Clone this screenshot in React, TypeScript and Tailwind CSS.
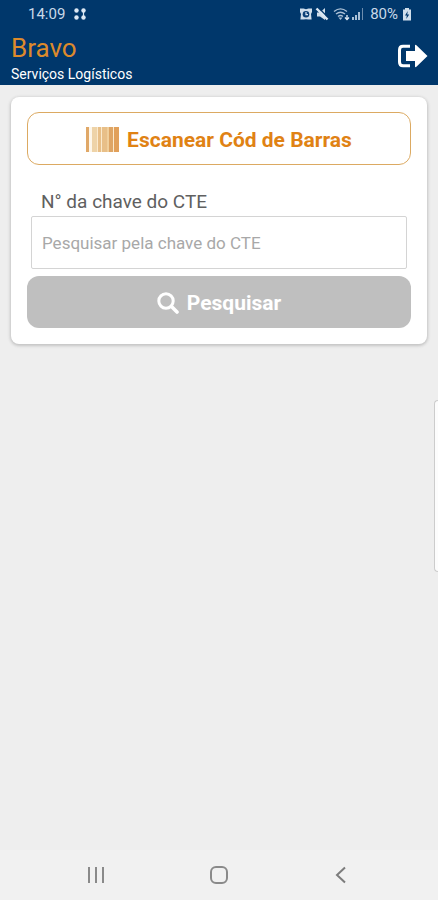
import React from "react";

function AppsIcon() {
  return (
    <svg width="14" height="14" viewBox="0 0 14 14" fill="#dce8f4" aria-hidden="true">
      <circle cx="3.500" cy="3.500" r="2.200" />
      <circle cx="10.500" cy="3.500" r="2.200" />
      <circle cx="3.500" cy="10.500" r="2.200" />
      <circle cx="10.500" cy="10.500" r="2.200" />
      <path d="M9.900 3h1.200v7H9.900z" />
    </svg>
  );
}

function AlarmIcon() {
  return (
    <svg width="14" height="14" viewBox="0 0 14 14" aria-hidden="true">
      <path d="M1 1.500h3.500l2.500.7 2.500-.7H13v3.500l-1 2 .6 5.500H9.500L7 12.200l-2.500.3H1.400L2 7 1 5z" fill="#d0deeb" />
      <circle cx="7" cy="7.200" r="3.300" fill="#0d4176" />
      <path d="M7 5V7.600h2" stroke="#dce8f4" strokeWidth="1.200" fill="none" />
    </svg>
  );
}

function MuteIcon() {
  return (
    <svg width="14" height="14" viewBox="0 0 14 14" aria-hidden="true">
      <path d="M2 5.500h3L10 1v12L5 9.500H2z" fill="#d0deeb" />
      <path d="M3.800 1l9.200 9.500" stroke="#00376b" strokeWidth="1.400" />
      <path d="M1.500 1.500l11 11" stroke="#dce8f4" strokeWidth="2.400" />
    </svg>
  );
}

function WifiIcon() {
  return (
    <svg width="18" height="14" viewBox="0 0 18 14" fill="none" stroke="#a9bfd5" strokeWidth="1.400" aria-hidden="true">
      <path d="M1 4.500Q7.500-.8 14 4.500M3 7q4.500-3.600 9 0M5 9.500q2.500-2 5 0" />
      <path d="M5.500 10.500h4L7.500 13z" fill="#a9bfd5" stroke="none" />
      <path d="M14 8v4.500" stroke="#dce8f4" />
      <path d="M12 10.500l2 2 2-2" stroke="#dce8f4" />
    </svg>
  );
}

function SignalIcon() {
  return (
    <svg width="13" height="14" viewBox="0 0 13 14" aria-hidden="true">
      <path d="M1 10h2v3H1zM4 8h2v5H4zM7 5h2v8H7z" fill="#a9bfd5" />
      <path d="M11 1h1v12h-1z" fill="#6d8dae" />
    </svg>
  );
}

function BatteryIcon() {
  return (
    <svg width="10" height="14" viewBox="0 0 10 14" aria-hidden="true">
      <path d="M3 1h4v1.500h2v11H1v-11h2z" fill="#d0deeb" />
      <path d="M5.800 4L3 8.500h1.800L4.300 12 7.200 7.500H5.200z" fill="#00376b" />
    </svg>
  );
}

function SignOutIcon() {
  return (
    <svg width="32" height="26" viewBox="0 0 32 26" aria-hidden="true">
      <path d="M14 3.200H7Q3.500 3.200 3.500 7v12q0 3.800 3.500 3.800H14" fill="none" stroke="#fff" strokeWidth="3" />
      <path d="M10 8h9V2.800q0-1.500 1.400-.6L31.500 13 20.400 23.800q-1.400 .9-1.400-.6V18H10z" fill="#fff" />
    </svg>
  );
}

function BarcodeIcon() {
  return (
    <svg width="33" height="25" viewBox="0 0 33 25" aria-hidden="true">
      <path d="M0 0h33v25H0z" fill="#fbe9cc" />
      <path d="M0 0h3v25H0z" fill="#e0a868" />
      <path d="M3 0h3v25H3z" fill="#fdf6ea" />
      <path d="M6 0h5v25H6z" fill="#eed3a8" />
      <path d="M12 0h3v25h-3zM16 0h5v25h-5z" fill="#e8bf88" />
      <path d="M21 0h2v25h-2z" fill="#f0cf9c" />
      <path d="M23 0h4v25h-4z" fill="#dea565" />
      <path d="M28 0h5v25h-5z" fill="#e1a05a" />
    </svg>
  );
}

function SearchIcon() {
  return (
    <svg width="22" height="22" viewBox="0 0 22 22" fill="none" stroke="#fff" aria-hidden="true">
      <circle cx="9" cy="9" r="7.200" strokeWidth="3" />
      <path d="M14.500 14.500L20 20" strokeWidth="3.600" strokeLinecap="round" />
    </svg>
  );
}

function StatusBar() {
  return (
    <div className="flex h-7 items-center justify-between pr-[26px] pl-7 text-[15px] text-[#c9d9e8]">
      <div className="flex items-center gap-2">
        <span>14:09</span>
        <AppsIcon />
      </div>
      <div className="flex items-center">
        <div className="mr-1 flex items-center gap-0.5">
          <AlarmIcon />
          <MuteIcon />
        </div>
        <WifiIcon />
        <SignalIcon />
        <span className="mr-1 ml-1.5">80%</span>
        <BatteryIcon />
      </div>
    </div>
  );
}

export default function App() {
  return (
    <div className="flex min-h-screen flex-col bg-[#eeeeee] font-['Roboto','Liberation_Sans',sans-serif]">
      <header className="h-[85px] bg-[#00376b]">
        <StatusBar />
        <div className="flex items-center justify-between pr-2.5 pl-[11px]">
          <div>
            <h1 className="pt-1 text-[26px] leading-8 text-[#dc8a2c]">Bravo</h1>
            <p className="text-sm leading-5 text-white">Serviços Logísticos</p>
          </div>
          <button type="button" aria-label="Sair">
            <SignOutIcon />
          </button>
        </div>
      </header>

      <main className="relative flex-1 px-[11px] pt-3">
        <form
          className="rounded-lg bg-white px-4 pt-[15px] pb-4 shadow-[0_1px_3px_1px_#c4c4c4]"
          onSubmit={(event) => event.preventDefault()}
        >
          <button
            type="button"
            className="flex h-[53px] w-full items-center justify-center gap-2 rounded-xl border border-[#dcaa62] pt-0.5 text-[21px] leading-8 font-bold text-[#e08214]"
          >
            <BarcodeIcon />
            Escanear Cód de Barras
          </button>
          <label htmlFor="cte" className="mt-[25px] block px-3.5 text-[19px] leading-6 text-[#606060]">
            N° da chave do CTE
          </label>
          <div className="px-1 pt-0.5">
            <input
              id="cte"
              type="text"
              placeholder="Pesquisar pela chave do CTE"
              className="block h-[53px] w-full rounded-xs border border-[#d4d4d4] bg-white px-2.5 text-[17px] text-[#606060] outline-none placeholder:text-[#a8a8a8]"
            />
          </div>
          <button
            type="submit"
            className="mt-[7px] flex h-[52px] w-full items-center justify-center gap-2 rounded-xl bg-[#bfbfbf] pt-0.5 text-[21px] leading-8 font-bold text-white"
          >
            <SearchIcon />
            Pesquisar
          </button>
        </form>
        <div className="absolute top-[315px] right-0 h-[172px] w-1 rounded-l-md border border-r-0 border-[#cccccc] bg-[#fcfcfc]" />
      </main>

      <nav className="flex h-[50px] items-center justify-between bg-[#f1f1f1] px-[84px]">
        <button type="button" aria-label="Recentes">
          <svg width="24" height="24" viewBox="0 0 24 24" stroke="#8a8a8a" strokeWidth="2">
            <path d="M5 4v16M12 4v16M19 4v16" />
          </svg>
        </button>
        <button type="button" aria-label="Início">
          <svg width="24" height="24" viewBox="0 0 24 24" fill="none" stroke="#8a8a8a" strokeWidth="2">
            <rect x="4" y="4" width="16" height="16" rx="5" />
          </svg>
        </button>
        <button type="button" aria-label="Voltar">
          <svg width="24" height="24" viewBox="0 0 24 24" fill="none" stroke="#7c7c7c" strokeWidth="2">
            <path d="M15 4.500L7 12l8 7.500" />
          </svg>
        </button>
      </nav>
    </div>
  );
}
